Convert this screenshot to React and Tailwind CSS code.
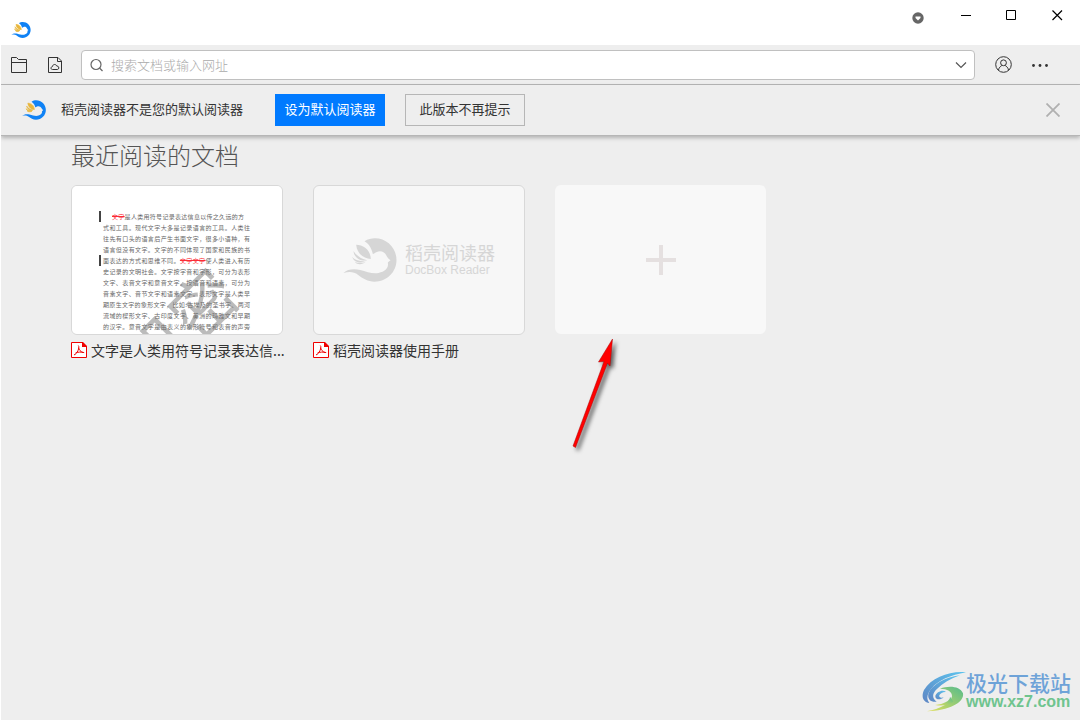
import React from 'react';

const docLines = [
    '式和工具。现代文字大多是记录语言的工具。人类往',
    '往先有口头的语言后产生书面文字，很多小语种，有',
    '语言但没有文字。文字的不同体现了国家和民族的书',
];

const docLinesAfter = [
    '史记录的文明社会。文字按字音和字形，可分为表形',
    '文字、表音文字和意音文字。按语音和语素，可分为',
    '音素文字、音节文字和语素文字。表形文字是人类早',
    '期原生文字的象形文字，比如:古埃及的圣书字、两河',
    '流域的楔形文字、古印度文字、美洲的玛雅文和早期',
    '的汉字。意音文字是由表义的象形符号和表音的声旁',
];

// bird in a ring, colors depend on where it is used
function Logo({ className, body, wing, wingStroke = 0 }) {
    return (
        <svg className={className} viewBox="12 26 161 132" aria-hidden="true">
            <path fill={body} d="M76 36C86 29 97 27 107 27C143 27 172 56 172 92C172 128 143 157 106 157C86 157 70 147 57 137C43 126 29 127 13 131C25 119 45 118 63 122C82 127 99 134 118 131C139 127 149 115 146 101C146 98 150 97 154 93C148 89 145 84 142 79C137 68 125 63 113 68C108 70 104 74 101 74C98 60 91 45 76 36Z" />
            <g fill={wing} stroke={wing} strokeWidth={wingStroke}>
                <path d="M51 46C73 46 94 62 95 89C73 88 53 72 51 46Z" />
                <path d="M43 65C51 78 66 89 84 93C66 97 45 87 43 65Z" />
                <path d="M39 83C48 93 64 97 80 96C65 103 45 100 39 83Z" />
                <path d="M47 98C57 102 68 101 79 99C70 106 54 107 47 98Z" />
            </g>
        </svg>
    );
}

function PdfIcon() {
    return (
        <svg className="h-4 w-4 shrink-0" viewBox="0 0 16 16" fill="none" aria-hidden="true">
            <path d="M.5.5H11L15.500 5V15.500H.5Z" fill="#fff" stroke="#f00000" />
            <path d="M11 0H12L16 4V5H11Z" fill="#f00000" />
            <path d="M7.300 3.500C8.200 4.500 7.900 6.500 7 8.500C6 10.700 4.700 12.500 3 12.900M4.500 11C7 10 10 9.700 13.200 10.600M7.500 5.500C8 7.800 9.500 9.600 12 10.600" stroke="#f00000" />
        </svg>
    );
}

function TitleBar() {
    return (
        <header className="flex h-[45px] items-start justify-between bg-white">
            <Logo className="mt-[22px] ml-[10px] h-4 w-5" body="#0f82f5" wing="#e8b63c" wingStroke={5} />
            <div className="flex">
                <button aria-label="皮肤" className="flex h-9 w-12 items-center justify-center">
                    <svg className="h-3 w-3" viewBox="0 0 12 12">
                        <circle cx="6" cy="6" r="5.700" fill="#666" />
                        <path d="M3.500 4.500H8.500V6L6 8.500L3.500 6Z" fill="#fff" />
                    </svg>
                </button>
                <button aria-label="最小化" className="flex h-[31px] w-[46px] items-center justify-center">
                    <svg className="h-[11px] w-[11px]" viewBox="0 0 11 11">
                        <path d="M1 5.500H11" stroke="#000" />
                    </svg>
                </button>
                <button aria-label="最大化" className="flex h-[31px] w-[46px] items-center justify-center">
                    <svg className="h-[11px] w-[11px]" viewBox="0 0 11 11">
                        <path d="M.5.5H9.500V9.500H.5Z" fill="none" stroke="#000" />
                    </svg>
                </button>
                <button aria-label="关闭" className="flex h-[31px] w-[46px] items-center justify-center">
                    <svg className="h-[11px] w-[11px]" viewBox="0 0 11 11">
                        <path d="M.5.5L10 10M10 .5L.5 10" stroke="#000" strokeWidth="1.200" />
                    </svg>
                </button>
            </div>
        </header>
    );
}

function Toolbar() {
    return (
        <div className="flex h-10 items-center border-b border-[#b6b6b6] pr-8 pl-[10px]">
            <button aria-label="打开">
                <svg className="h-4 w-4" viewBox="0 0 16 16" fill="none" stroke="#333">
                    <path d="M.5 15.500V.5H5.500L7.500 2.500H15.500V15.500ZM.5 5.500H15.500" />
                </svg>
            </button>
            <button aria-label="云文档" className="ml-5">
                <svg className="h-4 w-4" viewBox="0 0 16 16" fill="none" stroke="#333">
                    <path d="M1.500.5H11L14.500 4V15.500H1.500ZM10.500.5V4.500H14.500" />
                    <path d="M5.500 12.500C3.500 12.500 3.500 9.800 5.500 9.500C5.700 7 9 6.800 9.700 9C12.300 8.700 12.500 12.500 10.300 12.500Z" />
                </svg>
            </button>
            <div className="ml-[18px] flex h-[30px] grow items-center rounded-sm border border-[#c0c0c0] bg-white pr-[7px] pl-2">
                <svg className="h-[14px] w-[14px] shrink-0" viewBox="0 0 14 14" fill="none" stroke="#666" strokeWidth="1.200">
                    <circle cx="6" cy="6.500" r="5" />
                    <path d="M9.500 10L12.500 13" />
                </svg>
                <input
                    type="text"
                    aria-label="搜索文档或输入网址"
                    placeholder="搜索文档或输入网址"
                    className="ml-[7px] h-5 min-w-0 grow text-[13px] leading-5 font-light outline-none placeholder:text-[#aaa]"
                />
                <button aria-label="展开" className="w-3">
                    <svg className="h-3 w-3" viewBox="0 0 12 12" fill="none" stroke="#555" strokeWidth="1.200">
                        <path d="M1 3.500L6 8.500L11 3.500" />
                    </svg>
                </button>
            </div>
            <button aria-label="用户" className="ml-5">
                <svg className="h-[17px] w-[17px]" viewBox="0 0 17 17" fill="none" stroke="#333">
                    <circle cx="8.500" cy="8.500" r="7.800" />
                    <circle cx="8.500" cy="6.800" r="2.900" />
                    <path d="M3.500 14C4 11.500 5.500 10.300 6.800 9.500M13.500 14C13 11.500 11.500 10.300 10.200 9.500" />
                </svg>
            </button>
            <button aria-label="更多" className="ml-5">
                <svg className="h-4 w-4" viewBox="0 0 16 16" fill="#333">
                    <circle cx="1.500" cy="8.500" r="1.400" />
                    <circle cx="8" cy="8.500" r="1.400" />
                    <circle cx="14.500" cy="8.500" r="1.400" />
                </svg>
            </button>
        </div>
    );
}

function DefaultBanner() {
    return (
        <div className="flex h-[51px] items-center border-b border-[#b6b6b6] pr-5 pl-[21px] text-[13px] leading-5 text-[#333] shadow-[0_2px_4px_rgba(0,0,0,0.25)]">
            <Logo className="h-5 w-6" body="#0f82f5" wing="#e8b63c" wingStroke={4} />
            <span className="ml-[15px] pb-[2px]">稻壳阅读器不是您的默认阅读器</span>
            <button className="ml-8 h-8 w-[110px] bg-[#007aff] pb-[2px] text-white">设为默认阅读器</button>
            <button className="ml-5 h-8 w-[120px] border border-[#b6b6b6] pb-[2px]">此版本不再提示</button>
            <button aria-label="关闭提示" className="ml-auto">
                <svg className="h-[14px] w-[14px]" viewBox="0 0 14 14" stroke="#b0b0b0" strokeWidth="1.800">
                    <path d="M.5.5L13.500 13.500M13.500.5L.5 13.500" />
                </svg>
            </button>
        </div>
    );
}

function DocPage() {
    return (
        <div className="relative h-full w-full pt-[25px] pr-8 pl-[31px] text-[6px] leading-[11px] text-[#666]">
            <p className="-ml-1 border-l-2 border-[#444] pr-[6px] pl-[11px] text-justify whitespace-nowrap [text-align-last:justify]">
                <del className="text-red-500">文字</del>是人类用符号记录表达信息以传之久远的方
            </p>
            {docLines.map((line, i) => (
                <p key={i} className="text-justify whitespace-nowrap [text-align-last:justify]">{line}</p>
            ))}
            <p className="-ml-1 border-l-2 border-[#444] pl-[2px] text-justify whitespace-nowrap [text-align-last:justify]">
                面表达的方式和思维不同。<del className="text-red-500">文字文字</del>使人类进入有历
            </p>
            {docLinesAfter.map((line, i) => (
                <p key={i} className="text-justify whitespace-nowrap [text-align-last:justify]">{line}</p>
            ))}
            {/* stamp runs off the bottom of the preview */}
            <span className="absolute top-[106px] left-[42px] -rotate-45 text-[64px] leading-[64px] whitespace-nowrap text-[#777]/50">
                机密
            </span>
        </div>
    );
}

function DocCard({ name, children }) {
    return (
        <a href="#" className="block w-[212px]">
            <div className="h-[150px] overflow-hidden rounded-md border border-[#d8d8d8] bg-[#f7f7f7]">{children}</div>
            <div className="mt-[5px] flex items-center gap-1 text-sm leading-5 text-[#333]">
                <PdfIcon />
                <span className="whitespace-nowrap">{name}</span>
            </div>
        </a>
    );
}

function Arrow() {
    return (
        <svg className="absolute top-[148px] left-2 h-[124px] w-[64px]" viewBox="0 0 64 124" aria-hidden="true">
            <g className="drop-shadow-[3px_3px_2px_rgba(0,0,0,0.6)]">
                <path
                    d="M49.500 6L35.500 29L41 28.500L10 113L12.500 114.500L44.500 30L47 33Z"
                    fill="#f00"
                    stroke="#a00"
                    strokeWidth=".5"
                />
            </g>
        </svg>
    );
}

function SiteMark() {
    return (
        <div className="absolute right-[9px] bottom-[7px] flex items-center">
            <svg className="h-[42px] w-[44px]" viewBox="64 32 132 124" aria-hidden="true">
                <defs>
                    <linearGradient id="blue" x1="0" y1="1" x2="1" y2="0">
                        <stop offset="0" stopColor="#5f86c4" />
                        <stop offset="1" stopColor="#5cc4ee" />
                    </linearGradient>
                    <linearGradient id="green" x1="0" y1="1" x2="1" y2="0">
                        <stop offset="0" stopColor="#e2e05a" />
                        <stop offset="1" stopColor="#55bb8c" />
                    </linearGradient>
                </defs>
                <path fill="url(#blue)" d="M196 35C150 30 92 50 70 88C61 108 67 124 86 127C76 114 79 100 92 84C112 59 150 43 196 35Z" />
                <path fill="url(#blue)" d="M178 44C130 50 92 74 83 99C80 116 91 125 108 123C93 112 95 99 108 86C126 68 149 54 178 44Z" />
                <path fill="url(#blue)" d="M136 94C126 85 107 95 104 106C103 117 119 120 129 110C121 113 114 110 116 104C119 97 128 93 136 94Z" />
                <path fill="url(#green)" d="M118 84C144 74 178 76 187 98C192 126 144 151 78 152C119 145 151 128 154 107C155 93 140 84 118 84Z" />
                <path fill="url(#green)" d="M148 108C149 120 130 130 103 133C127 137 145 133 158 123Z" />
            </svg>
            <div className="flex flex-col">
                <span className="text-[21px] leading-5 font-medium text-[#6ea3d8]">极光下载站</span>
                <span className="font-['Liberation_Sans'] text-[16px] leading-5 font-bold text-[#6fc48e]">www.xz7.com</span>
            </div>
        </div>
    );
}

export default function App() {
    return (
        <div className="relative flex min-h-screen flex-col overflow-hidden border-x border-b border-white bg-[#eee] font-['Noto_Sans_CJK_SC',sans-serif]">
            <TitleBar />
            <Toolbar />
            <DefaultBanner />
            <main className="px-[70px] pt-[3px]">
                <h1 className="text-2xl leading-8 font-light text-[#555]">最近阅读的文档</h1>
                <div className="mt-[14px] flex flex-wrap gap-[30px]">
                    <DocCard name="文字是人类用符号记录表达信...">
                        <div className="h-full bg-white">
                            <DocPage />
                        </div>
                    </DocCard>
                    <DocCard name="稻壳阅读器使用手册">
                        <div className="flex h-full items-center justify-center gap-2 text-[#d6d6d6]">
                            <Logo className="h-11 w-[54px]" body="#d6d6d6" wing="#d6d6d6" />
                            <div className="flex flex-col">
                                <span className="text-[18px] leading-5">稻壳阅读器</span>
                                <span className="font-['Liberation_Sans'] text-[12px] leading-4">DocBox Reader</span>
                            </div>
                        </div>
                    </DocCard>
                    <div className="relative">
                        <button aria-label="添加文档" className="flex h-[149px] w-[211px] items-center justify-center rounded-md bg-[#f8f8f8]">
                            <svg className="h-[30px] w-[30px]" viewBox="0 0 30 30" stroke="#e5e0e0" strokeWidth="4">
                                <path d="M15 0V30M0 15H30" />
                            </svg>
                        </button>
                        <Arrow />
                    </div>
                </div>
            </main>
            <SiteMark />
        </div>
    );
}
